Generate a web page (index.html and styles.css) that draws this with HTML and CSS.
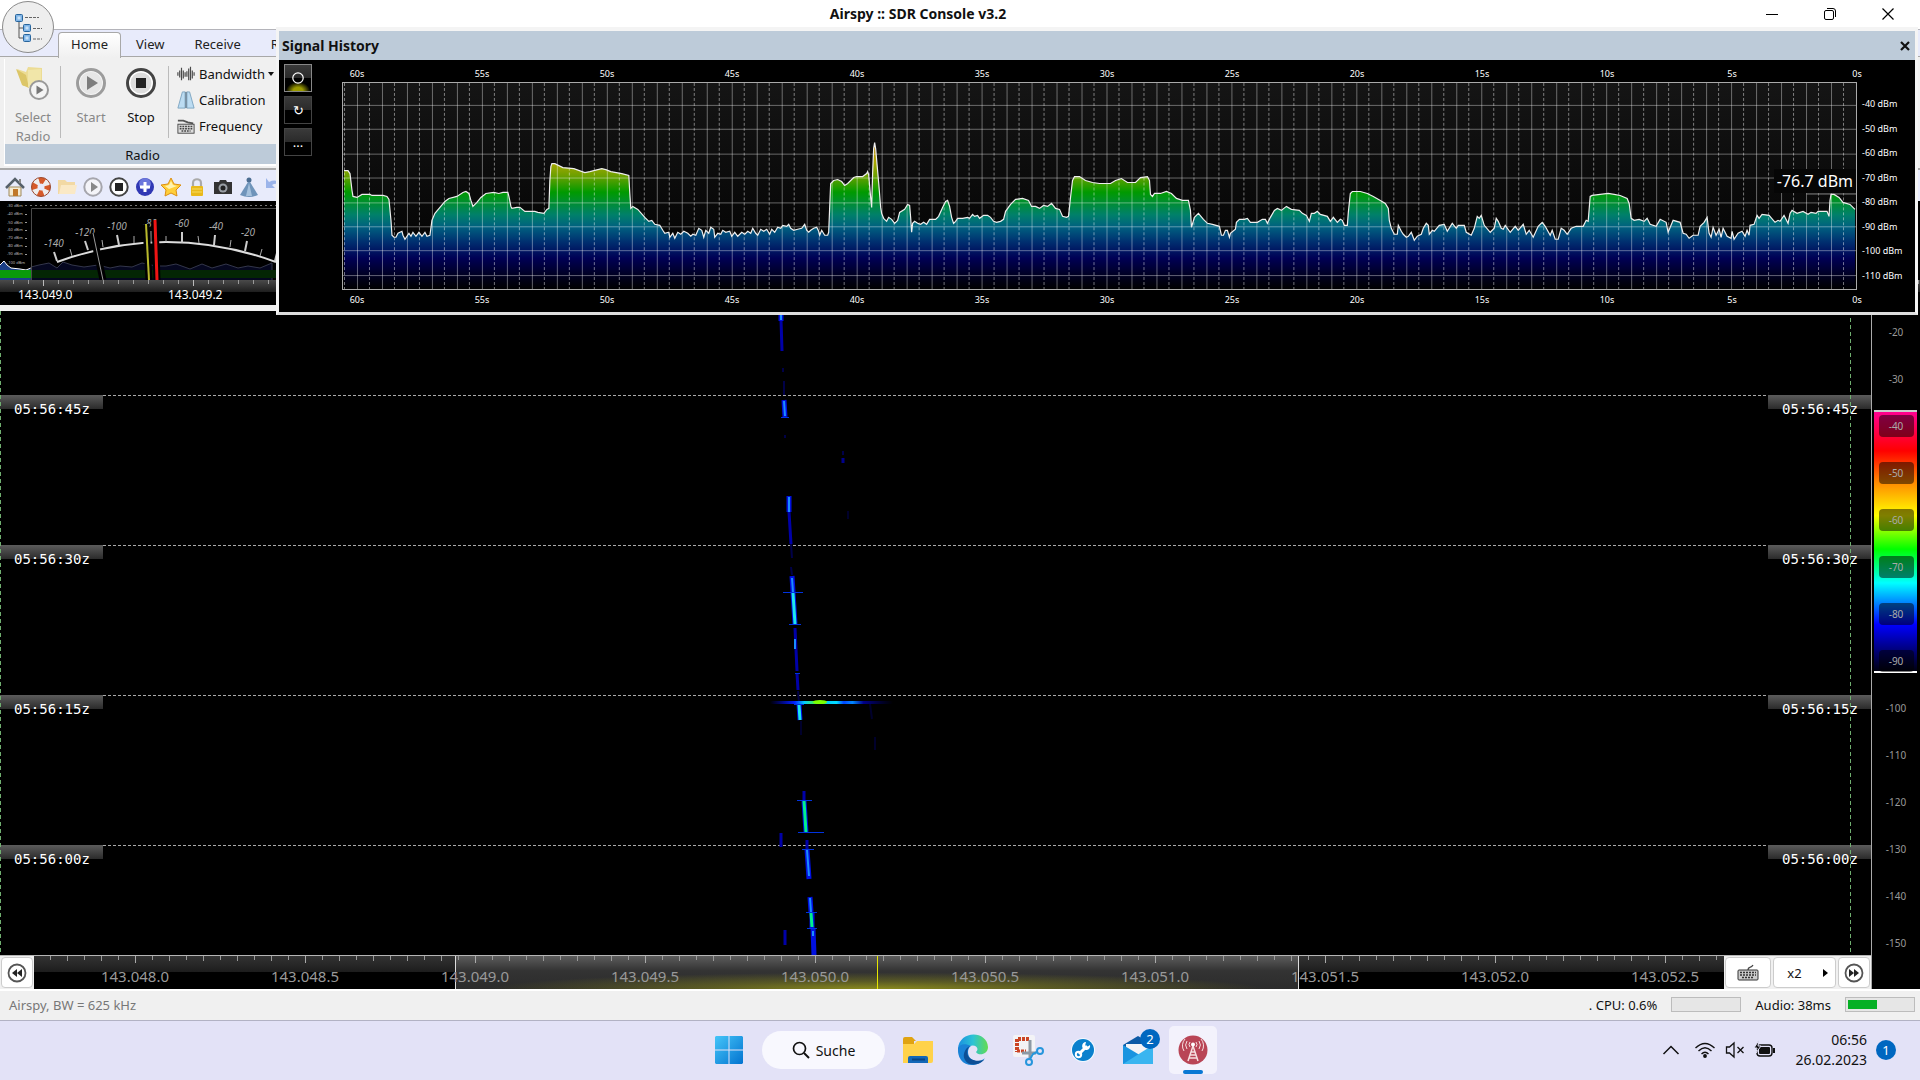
FILE: index.html
```html
<!DOCTYPE html>
<html lang="de">
<head>
  <meta charset="UTF-8" />
  <meta name="viewport" content="width=device-width, initial-scale=1.0"/>
  <title>Airspy :: SDR Console v3.2</title>
  <link rel="stylesheet" href="styles.css">
</head>
<body>

  <header class="titlebar">
    <h1>Airspy :: SDR Console v3.2</h1>
    <div class="window-controls">
      <button aria-label="Minimieren"><svg width="14" height="14"><path d="M1 7.5h12" stroke="#000"/></svg></button>
      <button aria-label="Verkleinern"><svg width="14" height="14" fill="none" stroke="#000"><rect x="1.5" y="3.5" width="9" height="9" rx="1.5"/><path d="M4 1.5h6q2.5 0 2.5 2.5v6"/></svg></button>
      <button aria-label="Schließen"><svg width="14" height="14"><path d="M1.5 1.5l11 11M12.5 1.5l-11 11" stroke="#000" stroke-width="1.2"/></svg></button>
    </div>
  </header>

  <button class="app-button" aria-label="Menü">
    <svg width="30" height="30" viewBox="0 0 30 30">
      <path d="M6 8v18h5M6 16h5" fill="none" stroke="#555"/>
      <path d="M12 5.5h14M20 16.5h9M20 27h9" stroke="#666" stroke-dasharray="3 1"/>
      <g fill="#7fb4e6" stroke="#28659c"><rect x="2.5" y="2.5" width="7" height="7" rx="1"/><rect x="10.5" y="12.5" width="7" height="7" rx="1"/><rect x="10.5" y="22.5" width="7" height="7" rx="1"/></g>
      <g fill="#c9e2f8"><rect x="4.5" y="4.5" width="3" height="3"/><rect x="12.5" y="14.5" width="3" height="3"/><rect x="12.5" y="24.5" width="3" height="3"/></g>
    </svg>
  </button>

  <!-- Menüband -->
  <section class="ribbon">
    <nav class="tabs">
      <a href="#" class="tab active">Home</a>
      <a href="#" class="tab">View</a>
      <a href="#" class="tab">Receive</a>
      <a href="#" class="tab">R</a>
    </nav>
    <div class="ribbon-body">
      <div class="group">
        <div class="group-tools">
          <button class="big-btn wide" disabled>
            <svg width="36" height="36" viewBox="0 0 36 36">
              <path d="M2 4l9 3 2-5 14 1v18H8z" fill="#ecdc94"/><path d="M1 4l10 6 3 13-7-3z" fill="#dcc668"/><path d="M13 5l13-1v15l-13 3z" fill="#f1e6a9"/>
              <circle cx="24" cy="25" r="9" fill="#f4f4f4" stroke="#999" stroke-width="2"/><path d="M21.5 20.5l7 4.5-7 4.5z" fill="#777"/>
            </svg>
            <span>Select<br>Radio</span>
          </button>
          <button class="big-btn" disabled>
            <svg width="36" height="36" viewBox="0 0 36 36"><circle cx="18" cy="18" r="13.5" fill="#f5f5f5" stroke="#9c9c9c" stroke-width="3"/><circle cx="18" cy="18" r="11" fill="#e6e6e6"/><path d="M14 11l11 7-11 7z" fill="#7d7d7d"/></svg>
            <span>Start</span>
          </button>
          <button class="big-btn">
            <svg width="36" height="36" viewBox="0 0 36 36"><circle cx="18" cy="18" r="13.5" fill="#fff" stroke="#444" stroke-width="3"/><circle cx="18" cy="18" r="10.5" fill="#ddd"/><rect x="13" y="13" width="10" height="10" fill="#222"/></svg>
            <span>Stop</span>
          </button>
          <div class="small-btns">
            <button>
              <svg width="20" height="20" viewBox="0 0 20 20"><path d="M1 8v4M3 6v8M5 3v14M7 6v9M9 8v5M11 7v6M13 4v13M15 2v15M17 6v9M19 8v4" stroke="#4a4a4a" stroke-width="1.3"/></svg>
              Bandwidth <i class="caret"></i>
            </button>
            <button>
              <svg width="20" height="20" viewBox="0 0 20 20"><path d="M6 1h3v18H1zM11 1h3l5 18h-8z" fill="#bcdcf2" stroke="#7ba3c0"/><path d="M10 1v18" stroke="#39556b"/></svg>
              Calibration
            </button>
            <button>
              <svg width="20" height="20" viewBox="0 0 20 20"><path d="M1 4h6l5 2 6 1" fill="none" stroke="#555" stroke-width="2"/><rect x="1" y="8" width="18" height="10" fill="#ddd" stroke="#444"/><path d="M3 10.5h14M3 13h14M5 15.5h10" stroke="#444" stroke-width="1.5" stroke-dasharray="2 1"/></svg>
              Frequency
            </button>
          </div>
        </div>
        <div class="group-caption">Radio</div>
      </div>
    </div>
    <div class="quickbar">
      <button aria-label="Home"><svg viewBox="0 0 20 20"><path d="M4 10h12v9H4z" fill="#f4ead2" stroke="#a08a5c"/><path d="M1 11l9-9 9 9" fill="none" stroke="#56606a" stroke-width="2.5"/><path d="M14 2h2v4h-2z" fill="#888"/><path d="M8 12h5v7H8z" fill="#c0772a"/></svg></button>
      <button aria-label="Hilfe"><svg viewBox="0 0 20 20"><circle cx="10" cy="10" r="6.5" fill="none" stroke="#eee" stroke-width="6"/><circle cx="10" cy="10" r="6.5" fill="none" stroke="#d65a2a" stroke-width="6" stroke-dasharray="5.5 4.71" stroke-dashoffset="2.7"/><circle cx="10" cy="10" r="9.5" fill="none" stroke="#9a4a30"/></svg></button>
      <button aria-label="Öffnen"><svg viewBox="0 0 20 20"><path d="M1 3h7l2 2h8v12H1z" fill="#f2d9a4"/><path d="M4 8h16l-2 9H2z" fill="#fae9c6"/></svg></button>
      <button aria-label="Start"><svg viewBox="0 0 20 20"><circle cx="10" cy="10" r="8.7" fill="#f4f4f8" stroke="#a6a6ad" stroke-width="2"/><path d="M8 5l7 5-7 5z" fill="#888"/></svg></button>
      <button aria-label="Stop"><svg viewBox="0 0 20 20"><circle cx="10" cy="10" r="8.7" fill="#fff" stroke="#444" stroke-width="2"/><path d="M6 6h8v8H6z" fill="#222"/></svg></button>
      <button aria-label="Hinzufügen"><svg viewBox="0 0 20 20"><circle cx="10" cy="10" r="9" fill="#3038b4"/><circle cx="10" cy="7" r="6" fill="#6b76dc"/><path d="M10 5v10M5 10h10" stroke="#fff" stroke-width="3"/></svg></button>
      <button aria-label="Favoriten"><svg viewBox="0 0 20 20"><path d="M10 1l3 6 7 1-5 5 1 6-6-3-6 3 1-6-5-5 7-1z" fill="#ffcf3a" stroke="#dc8f12"/><path d="M10 4l2 4 4 1-8 3-4-3 4-1z" fill="#fff3b0"/></svg></button>
      <button aria-label="Sperren"><svg viewBox="0 0 20 20"><path d="M6 9V6c0-5 8-5 8 0v3" fill="none" stroke="#aaa" stroke-width="2.2"/><rect x="4" y="9" width="12" height="10" rx="1" fill="#e9b91b"/><path d="M5 12h10M5 15h10" stroke="#f7dc61"/></svg></button>
      <button aria-label="Foto"><svg viewBox="0 0 20 20"><path d="M1 5h5l1-2h6l1 2h5v12H1z" fill="#333"/><circle cx="10" cy="11" r="4.5" fill="#9a9fa5"/><circle cx="10" cy="11" r="2.5" fill="#222"/></svg></button>
      <button aria-label="Antenne"><svg viewBox="0 0 20 20"><circle cx="10" cy="3" r="2.5" fill="#4c6d91"/><path d="M9 5h2l8 13q-9 4-18 0z" fill="#6f94ba"/><path d="M10 6l3 13H7z" fill="#a5c1dc"/></svg></button>
      <button aria-label="Zurück"><svg viewBox="0 0 20 20"><path d="M1 1v10h9L7 8q6-4 11 4Q14 0 4 5z" fill="#9bb4ea"/></svg></button>
    </div>
  </section>

  <main class="workspace">
    <!-- Spektrum mit S-Meter -->
    <section class="spectrum">
      <svg class="meter" width="276" height="79" viewBox="0 0 276 79">
        <path d="M25 4.5H276" stroke="#777" stroke-dasharray="2 3"/>
        <g class="tiny">
          <text x="7" y="6">-30 dBm</text><text x="7" y="14">-40 dBm</text><text x="7" y="23">-50 dBm</text><text x="7" y="30">-60 dBm</text>
          <text x="7" y="38">-70 dBm</text><text x="7" y="46">-80 dBm</text><text x="7" y="54">-90 dBm</text><text x="7" y="63">-100 dBm</text>
        </g>
        <path d="M25 13.5h2M25 21.5h2M25 29.5h2M25 37.5h2M25 45.5h2M25 53.5h2" stroke="#999"/>
        <path d="M0 64l4-4 3 4 4 3 9 1 6 1 5-2v12H0z" fill="#1b3f86"/>
        <path d="M0 64l4-4 3 4 4 3 9 1 6 1 5-2" fill="none" stroke="#fff"/>
        <path d="M31 66l8-2 10-2 8 5 6-6 9 3 12 2 14-2 12 3 10-2 12 1 10-4 14 3 10 0 10-2 14 5 12-5 10 4 14-4 12 4 10-2 12 2 12-5v19H31z" fill="#05071f" stroke="#33364a"/>
        <path d="M0 69h31v8H0z" fill="#0a9a0a"/>
        <path d="M31 69h245v8H31z" fill="#042604"/>
        <path d="M31.5 79V7.5H276" fill="none" stroke="#4a4a4a"/>
        <path d="M57 61Q166 21 276 61" fill="none" stroke="#ddd" stroke-width="2"/>
        <path d="M57 60l-3-9M88 49l-3-9M119 44l-2-10M182 42V31M214 44l1-10M245 50l2-10M275 60l2-8" stroke="#ccc" stroke-width="2"/>
        <path d="M72 55l-2-7M103 46l-1-7M134 42v-7M151 42V30M166 41v-6M199 42l-1-7M230 46l1-7M260 55l2-7" stroke="#aaa"/>
        <g class="meter-labels">
          <text x="54" y="46">-140</text><text x="85" y="35">-120</text><text x="117" y="29">-100</text><text x="150" y="26">-80</text>
          <text x="182" y="26">-60</text><text x="216" y="29">-40</text><text x="248" y="35">-20</text>
        </g>
        <path d="M93 32l10 47" stroke="#000" stroke-width="7"/><path d="M93 32l10 47" stroke="#999"/>
        <path d="M146 23l3 56M155 19l2 60" stroke="#000" stroke-width="7"/>
        <path d="M146 23l3 56" stroke="#b9b92c" stroke-width="2"/>
        <path d="M155 19l2 60" stroke="#f01414" stroke-width="3"/>
      </svg>
      <div class="mini-ruler"><span>143.049.0</span><span>143.049.2</span></div>
    </section>

    <section class="receiver">
      <div class="receiver-main">
        <div class="splitter"></div>
        <div class="waterfall">
          <div class="time-row"><time>05:56:45z</time><i></i><time>05:56:45z</time></div>
          <div class="time-row"><time>05:56:30z</time><i></i><time>05:56:30z</time></div>
          <div class="time-row"><time>05:56:15z</time><i></i><time>05:56:15z</time></div>
          <div class="time-row"><time>05:56:00z</time><i></i><time>05:56:00z</time></div>
          <svg class="trace" viewBox="0 0 1871 644" preserveAspectRatio="none">
            <defs>
              <linearGradient id="burst">
                <stop offset="0" stop-color="#00f" stop-opacity="0"/><stop offset=".2" stop-color="#02f"/><stop offset=".28" stop-color="#0cf"/>
                <stop offset=".4" stop-color="#6f0"/><stop offset=".47" stop-color="#0cf"/><stop offset=".54" stop-color="#0df"/><stop offset=".6" stop-color="#04f"/>
                <stop offset=".67" stop-color="#08f"/><stop offset=".76" stop-color="#008"/><stop offset="1" stop-color="#006" stop-opacity="0"/>
              </linearGradient>
            </defs>
            <!-- schwache Anteile -->
            <g stroke="#000048" stroke-width="2">
              <path d="M783 57v4M784 70v14M791 233l1 14M791 256l1 8M798 380l1 12M843 140v4M785 124v3"/>
              <path d="M870 393l2 15M875 426v13M848 200v8M801 410v14" opacity=".6"/>
            </g>
            <path d="M843 147v5" stroke="#00008c" stroke-width="3"/>
            <g stroke="#0000a8" stroke-width="3">
              <path d="M781 9l1 31M789 201l2 32M795 317l2 43M797 362l1 17M781 522v14M785 619v15M804 480v9M807 529v9"/>
            </g>
            <g stroke="#0010e0" stroke-width="5">
              <path d="M784 89l1 17M789 185v16M792 265l1 16M793 281l2 32M799 393l1 16M804 490l2 31M807 538l2 30M810 586l1 15M812 601v16M813 617l1 27M781 4v6"/>
            </g>
            <g stroke="#1a8cff" stroke-width="2">
              <path d="M784 90l1 15M789 186v15M792 267l1 14M807 539l2 26M810 587l1 14M781 4v5M795 328v10M813 620v5"/>
            </g>
            <g stroke="#0033e0">
              <path d="M783 281.5h20M789 313.5h12M797 489.5h15M798 521.5h26M802 538.5h12M806 601.5h11M807 617.5h10M781 106.5h8M795 362.5h5M794 393.5h10"/>
            </g>
            <path d="M793 282l2 31M799 394l1 15" stroke="#1ce6ee" stroke-width="3"/>
            <path d="M804 490l2 31M811 602l1 14" stroke="#00f08c" stroke-width="3"/>
            <rect x="770" y="390" width="123" height="3" fill="url(#burst)"/>
            <ellipse cx="820" cy="391" rx="7" ry="2" fill="#7dff00"/>
          </svg>
        </div>
        <div class="tuning">
          <button class="icon-btn" aria-label="Zurück"><svg width="20" height="20" viewBox="0 0 20 20"><circle cx="10" cy="10" r="8.5" fill="#fff" stroke="#555" stroke-width="1.8"/><path d="M10 6v8l-5-4zM15 6v8l-5-4z" fill="#222"/></svg></button>
          <div class="ruler">
            <div class="passband"></div>
            <span>143.048.0</span><span>143.048.5</span><span>143.049.0</span><span>143.049.5</span><span>143.050.0</span>
            <span>143.050.5</span><span>143.051.0</span><span>143.051.5</span><span>143.052.0</span><span>143.052.5</span>
          </div>
          <div class="tuning-btns">
            <button class="icon-btn wide" aria-label="Frequenz eingeben"><svg width="22" height="20" viewBox="0 0 22 20"><path d="M11 7c0-4 3-1 5-5" fill="none" stroke="#444" stroke-width="1.3"/><rect x="1" y="7" width="20" height="10" rx="1" fill="#ccc" stroke="#333"/><path d="M3 9.5h16M3 12h16M5 14.5h12" stroke="#333" stroke-width="1.5" stroke-dasharray="2 1"/></svg></button>
            <button class="icon-btn zoom">x2 <i class="caret-right"></i></button>
            <button class="icon-btn" aria-label="Vor"><svg width="20" height="20" viewBox="0 0 20 20"><circle cx="10" cy="10" r="8.5" fill="#fff" stroke="#555" stroke-width="1.8"/><path d="M10 6v8l5-4zM5 6v8l5-4z" fill="#222"/></svg></button>
          </div>
        </div>
      </div>

      <aside class="scale">
        <span>-20</span><span>-30</span>
        <div class="colours">
          <span><b>-40</b></span><span><b>-50</b></span><span><b>-60</b></span><span><b>-70</b></span><span><b>-80</b></span><span><b>-90</b></span>
        </div>
        <span>-100</span><span>-110</span><span>-120</span><span>-130</span><span>-140</span><span>-150</span>
      </aside>
    </section>
  </main>

  <!-- Schwebendes Fenster -->
  <section class="history">
    <div class="history-head">
      <h2>Signal History</h2>
      <button aria-label="Schließen"><svg width="12" height="12"><path d="M2 2l8 8M10 2l-8 8" stroke="#111" stroke-width="2.2"/></svg></button>
    </div>
    <div class="history-body">
      <div class="history-tools">
        <button class="on" aria-label="Aufnahme"><svg width="14" height="14"><circle cx="7" cy="7" r="5.2" fill="none" stroke="#fff" stroke-width="1.2"/></svg></button>
        <button aria-label="Neu starten">↻</button>
        <button aria-label="Mehr">...</button>
      </div>
      <div class="chart">
        <div class="seconds">
          <span>60s</span><span>55s</span><span>50s</span><span>45s</span><span>40s</span><span>35s</span><span>30s</span><span>25s</span><span>20s</span><span>15s</span><span>10s</span><span>5s</span><span>0s</span>
        </div>
        <div class="plot">
          <svg viewBox="0 0 1514 207" preserveAspectRatio="none">
            <defs>
              <linearGradient id="level" gradientUnits="userSpaceOnUse" x1="0" y1="0" x2="0" y2="207">
                <stop offset=".29" stop-color="#b87800"/><stop offset=".38" stop-color="#b0a800"/><stop offset=".45" stop-color="#6ca000"/>
                <stop offset=".53" stop-color="#009a00"/><stop offset=".64" stop-color="#00806a"/><stop offset=".7" stop-color="#006080"/>
                <stop offset=".77" stop-color="#003070"/><stop offset=".85" stop-color="#000055"/><stop offset=".94" stop-color="#00001e"/><stop offset="1" stop-color="#000"/>
              </linearGradient>
              <pattern id="secs" x="14" width="25" height="207" patternUnits="userSpaceOnUse">
                <path d="M.5 0v207" stroke="#fff" stroke-opacity=".38"/>
                <path d="M12.5 0v207" stroke="#fff" stroke-opacity=".45" stroke-dasharray="3 2"/>
              </pattern>
            </defs>
            <path id="area" fill="url(#level)"/>
            <rect width="1514" height="207" fill="url(#secs)"/>
            <path d="M0 22.5H1514M0 46.5H1514M0 71.5H1514M0 95.5H1514M0 120.5H1514M0 144.5H1514M0 168.5H1514M0 193.5H1514" stroke="#fff" stroke-opacity=".38"/>
            <path d="M1464 111.5h50" stroke="#888"/>
            <polyline id="line" fill="none" stroke="#eee" stroke-width="1.2"/>
          </svg>
          <output class="reading">-76.7 dBm</output>
        </div>
        <div class="levels">
          <span>-40 dBm</span><span>-50 dBm</span><span>-60 dBm</span><span>-70 dBm</span><span>-80 dBm</span><span>-90 dBm</span><span>-100 dBm</span><span>-110 dBm</span>
        </div>
        <div class="seconds">
          <span>60s</span><span>55s</span><span>50s</span><span>45s</span><span>40s</span><span>35s</span><span>30s</span><span>25s</span><span>20s</span><span>15s</span><span>10s</span><span>5s</span><span>0s</span>
        </div>
      </div>
    </div>
  </section>

  <footer class="statusbar">
    <span class="device">Airspy, BW = 625 kHz</span>
    <label for="cpu">. CPU: 0.6%</label>
    <progress id="cpu" value="0" max="100"></progress>
    <label for="audio">Audio: 38ms</label>
    <progress id="audio" value="46" max="100"></progress>
  </footer>

  <nav class="taskbar">
    <div class="apps">
      <button class="app" aria-label="Start"><svg width="30" height="30" viewBox="0 0 30 30"><defs><linearGradient id="blue" gradientUnits="userSpaceOnUse" x1="0" y1="0" x2="30" y2="30"><stop stop-color="#48c8fa"/><stop offset="1" stop-color="#0070ce"/></linearGradient></defs><path d="M2 1h12.500v13.500H1V2zM15.500 1H28l1 1v12.500H15.500zM1 15.500h13.500V29H2l-1-1zM15.500 15.500H29V28l-1 1H15.500z" fill="url(#blue)"/></svg></button>
      <button class="search"><svg width="18" height="18" viewBox="0 0 18 18"><circle cx="7.5" cy="7.5" r="6" fill="none" stroke="#111" stroke-width="1.7"/><path d="M12 12l5 5" stroke="#111" stroke-width="1.9"/></svg>Suche</button>
      <button class="app" aria-label="Explorer"><svg width="32" height="30" viewBox="0 0 32 30"><path d="M1 4q0-2 2-2h7l4 4h-2v6H1z" fill="#e0a312"/><path d="M1 9h11l3-3h16v20q0 2-2 2H1z" fill="#ffd24a"/><path d="M6 28v-5q0-2 2-2h16q2 0 2 2v5z" fill="#1368b8"/><path d="M10 24.5h13" stroke="#0a4483" stroke-width="2"/></svg></button>
      <button class="app" aria-label="Edge"><svg width="32" height="32" viewBox="0 0 32 32"><defs><linearGradient id="edge"><stop stop-color="#1a8fe0"/><stop offset=".5" stop-color="#2cc3d5"/><stop offset="1" stop-color="#63dc4f"/></linearGradient></defs><path d="M1 15C2-4 30-4 31 13c0 8-10 9-12 5 4-4-1-8-6-6C8 13 6 20 7 24 3 23 1 19 1 15z" fill="url(#edge)"/><path d="M1 14c2-4 7-5 13-2-5 3-4 14 5 15 5 1 9-3 9-3-5 9-19 9-24 2C1 22 1 18 1 14z" fill="#1a82d6"/><path d="M13 12c-6 6-2 18 14 14-6 6-16 6-19 0-3-5 0-12 5-14z" fill="#0d4f96"/></svg></button>
      <button class="app" aria-label="Snipping Tool"><svg width="32" height="32" viewBox="0 0 32 32"><rect x="1" y="1" width="22" height="22" rx="2" fill="#f3f3f6"/><path d="M17 5H5v13" fill="none" stroke="#cb4424" stroke-width="4" stroke-dasharray="3 1"/><path d="M5 17h9" stroke="#cb4424" stroke-width="3" stroke-dasharray="3 1"/><path d="M18 6v18M10 19h14" stroke="#8d99a4" stroke-width="3"/><circle cx="28" cy="17" r="3" fill="none" stroke="#2796dc" stroke-width="2"/><circle cx="17" cy="28" r="3" fill="none" stroke="#2796dc" stroke-width="2"/><path d="M18 25l3-5 4-2" fill="none" stroke="#2796dc" stroke-width="2"/></svg></button>
      <button class="app" aria-label="Werkzeug"><svg width="26" height="26" viewBox="0 0 26 26"><circle cx="13" cy="13" r="12" fill="#f4faff"/><circle cx="13" cy="13" r="11" fill="#0a80cd"/><path d="M9 17l8-8" stroke="#fff" stroke-width="3"/><circle cx="8.5" cy="17.5" r="2.7" fill="none" stroke="#fff" stroke-width="2"/><path d="M20 8a4 4 0 1 1-4-3l-1 4 2 1z" fill="#fff"/></svg></button>
      <button class="app" aria-label="Mail"><svg width="32" height="32" viewBox="0 0 32 32"><path d="M1 11L16 2l15 9v5H1z" fill="#0c5aa5"/><path d="M4 10h24v9l-12 5-12-5z" fill="#f4f4f6"/><path d="M1 11l30 18v1H1z" fill="#1a94e0"/><path d="M31 11L1 30h30z" fill="#3ab5f0"/></svg><b class="count">2</b></button>
      <button class="app current" aria-label="SDR Console"><svg width="30" height="30" viewBox="0 0 30 30"><circle cx="15" cy="15" r="14.5" fill="#b94556"/><g fill="none" stroke="#f6dfe0"><path d="M15 11L10 26M15 11l5 15M13 17h4M12 20h6M11 23h8" stroke-width="1.5"/><path d="M9 14a7 7 0 0 1 0-8M21 14a7 7 0 0 0 0-8M6 16a10 10 0 0 1 1-12M24 16a10 10 0 0 0-1-12M12 12a4 4 0 0 1 0-5M18 12a4 4 0 0 0 0-5"/></g><circle cx="15" cy="9.5" r="2" fill="#fff"/></svg></button>
    </div>
    <div class="tray">
      <button aria-label="Ausgeblendete Symbole"><svg width="18" height="12" fill="none" stroke="#111" stroke-width="1.5"><path d="M1.5 10L9 2.5l7.500 7.500"/></svg></button>
      <button aria-label="WLAN"><svg width="22" height="18" viewBox="0 0 22 18" fill="none" stroke="#111" stroke-width="1.4"><path d="M1.5 7q9.500-9 19 0M4.500 10q6.500-6.500 13 0M7.500 13q3.500-3.500 7 0"/><circle cx="11" cy="15" r="1.2" fill="#111"/></svg></button>
      <button aria-label="Ton aus"><svg width="20" height="18" viewBox="0 0 20 18" fill="none" stroke="#111" stroke-width="1.3"><path d="M1.5 6v6h3l4.500 4V2L4.500 6zM12.500 6l6 6M18.500 6l-6 6"/></svg></button>
      <button aria-label="Akku"><svg width="22" height="20" viewBox="0 0 22 20"><rect x="3" y="5" width="15" height="11" rx="3" fill="none" stroke="#111" stroke-width="1.4"/><rect x="5" y="7" width="11" height="7" rx="1" fill="#111"/><path d="M20 8v5" stroke="#111" stroke-width="2"/><path d="M5 0L0 8h3l-1 5 5-7H4z" fill="#111" stroke="#e3e2f7"/></svg></button>
      <div class="clock"><span>06:56</span><span>26.02.2023</span></div>
      <b class="count">1</b>
    </div>
  </nav>

  <script src="script.js"></script>
</body>
</html>
```

FILE: styles.css
```css
* {
  box-sizing: border-box;
}

body {
  margin: 0;
  min-height: 100vh;
  display: flex;
  flex-direction: column;
  font-family: "Noto Sans", "Open Sans", sans-serif;
  font-size: 13px;
  color: #111;
  background: #000;
  overflow: hidden;
}

button {
  font: inherit;
  color: inherit;
  background: none;
  border: none;
  padding: 0;
}

svg {
  display: block;
  flex: none;
}

h1, h2 {
  margin: 0;
  font-size: 14px;
  font-weight: bold;
}

/* Titelleiste */
.titlebar {
  display: flex;
  align-items: center;
  height: 29px;
  padding: 0 3px 2px 93px;
  background: #fff;
}

.titlebar h1 {
  flex: 1;
  text-align: center;
}

.window-controls {
  display: flex;
}

.window-controls button {
  width: 58px;
  height: 27px;
  display: flex;
  align-items: center;
  justify-content: center;
}

.app-button {
  position: absolute;
  left: 2px;
  top: 1px;
  width: 52px;
  height: 52px;
  display: flex;
  align-items: center;
  justify-content: center;
  border: 1px solid #8b8b8b;
  border-radius: 50%;
  background: #eee;
}

/* Menüband */
.ribbon {
  background: #e8ebfb;
}

.tabs {
  display: flex;
  height: 28px;
  padding: 2px 0 0 58px;
  border-top: 1px solid #b4b4ba;
  border-bottom: 1px solid #a8a8a8;
}

.tab {
  padding: 0 15px;
  line-height: 25px;
  color: #222;
  text-decoration: none;
}

.tab.active {
  height: 26px;
  padding: 0 12px;
  line-height: 23px;
  border: 1px solid #a8a8a8;
  border-bottom: none;
  border-radius: 4px 4px 0 0;
  background: linear-gradient(#fff, #f0f0f0);
}

.ribbon-body {
  padding: 2px 4px;
  background: #f0f0f0;
  border-bottom: 2px solid #aaa;
}

.group {
  border-left: 1px solid #fff;
  border-bottom: 2px solid #fff;
}

.group-tools {
  display: flex;
  height: 85px;
  padding-top: 2px;
}

.big-btn {
  width: 50px;
  height: 78px;
  padding-top: 4px;
  line-height: 19px;
  display: flex;
  flex-direction: column;
  align-items: center;
  gap: 7px;
}

.big-btn.wide {
  width: 61px;
  padding-right: 5px;
  background: linear-gradient(#bbb, #bbb) no-repeat 55px 5px / 1px 72px;
}

.big-btn:disabled {
  color: #888;
}

.small-btns {
  display: flex;
  flex-direction: column;
  margin-left: 2px;
  height: 78px;
  padding-left: 8px;
  background: linear-gradient(#bbb, #bbb) no-repeat 0 5px / 1px 72px;
}

.small-btns button {
  display: flex;
  align-items: center;
  gap: 3px;
  height: 26px;
}

.small-btns button svg {
  height: 18px;
}

.caret {
  border: 3px solid transparent;
  border-top: 4px solid #111;
  border-bottom: none;
}

.group-caption {
  height: 20px;
  padding-right: 1636px;
  line-height: 22px;
  text-align: center;
  background: #bdcbd9;
}

.quickbar {
  display: flex;
  gap: 6px;
  height: 31px;
  padding: 7px 5px 4px;
}

.quickbar svg {
  width: 20px;
  height: 20px;
}

/* Spektrum */
.workspace {
  flex: 1;
  display: flex;
  flex-direction: column;
}

.spectrum {
  height: 104px;
}

.tiny {
  font-size: 4px;
  fill: #bbb;
}

.meter-labels {
  font-size: 10px;
  font-style: italic;
  fill: #aaa;
  text-anchor: middle;
}

.mini-ruler {
  display: flex;
  height: 25px;
  padding: 5px 0 0 18px;
  line-height: 20px;
  font-size: 12px;
  color: #fff;
  background:
    repeating-linear-gradient(90deg, #bbb 0 1px, transparent 1px 150px) 43px 0 / 100% 6px no-repeat,
    repeating-linear-gradient(90deg, #999 0 1px, transparent 1px 15px) 13px 0 / 100% 4px no-repeat,
    linear-gradient(#4a4a4a, #1c1c1c 50%, #000 50%);
}

.mini-ruler span {
  width: 150px;
}

.splitter {
  height: 6px;
  background: #f0f0f0;
}

/* Wasserfall */
.receiver {
  flex: 1;
  display: flex;
}

.receiver-main {
  flex: 1;
  min-width: 0;
  display: flex;
  flex-direction: column;
}

.waterfall {
  position: relative;
  flex: 1;
  padding-top: 84px;
}

.waterfall::before,
.waterfall::after {
  content: "";
  position: absolute;
  top: 0;
  bottom: 0;
  left: 0;
  width: 1px;
  background: repeating-linear-gradient(#6fae6f 0 4px, transparent 4px 7px);
}

.waterfall::after {
  left: auto;
  right: 20px;
}

.time-row {
  display: flex;
  height: 150px;
}

.time-row:nth-child(4) {
  height: 100px;
}

.time-row time {
  width: 103px;
  padding: 4px 0 0 14px;
  font-family: "DejaVu Sans Mono", monospace;
  font-size: 14px;
  line-height: 20px;
  color: #fff;
  background: linear-gradient(#5c5c5c, #2b2b2b) no-repeat 0 0 / 100% 14px;
}

.time-row i {
  flex: 1;
  height: 1px;
  background: repeating-linear-gradient(90deg, #aaa 0 3px, transparent 3px 5px);
}

.trace {
  position: absolute;
  left: 0;
  top: 0;
  width: 100%;
  height: 100%;
}

/* Frequenzskala */
.tuning {
  display: flex;
  height: 34px;
  border-top: 1px solid #b5b5b5;
  background: #f0f0f0;
}

.icon-btn {
  width: 32px;
  height: 31px;
  margin: 1px;
  display: flex;
  align-items: center;
  justify-content: center;
  border: 1px solid #ccc;
  border-radius: 4px;
  background: #fff;
}

.icon-btn.wide {
  width: 46px;
}

.icon-btn.zoom {
  width: 63px;
  gap: 21px;
  padding-left: 6px;
}

.caret-right {
  border: 4px solid transparent;
  border-left: 5px solid #000;
  border-right: none;
}

.tuning-btns {
  display: flex;
}

.ruler {
  position: relative;
  flex: 1;
  min-width: 0;
  display: flex;
  padding-left: 16px;
  overflow: hidden;
  background: linear-gradient(#333, #1c1c1c 50%, #000 50%);
}

.ruler::before {
  content: "";
  position: absolute;
  inset: 0;
  z-index: 1;
  background:
    repeating-linear-gradient(90deg, #aaa 0 1px, transparent 1px 170px) 101px 0 / 100% 7px no-repeat,
    repeating-linear-gradient(90deg, #999 0 1px, transparent 1px 34px) -1px 0 / 100% 5px no-repeat,
    repeating-linear-gradient(90deg, #999 0 1px, transparent 1px 17px) -1px 0 / 100% 4px no-repeat;
}

.ruler span {
  position: relative;
  flex: none;
  width: 170px;
  padding-top: 5px;
  font-size: 15px;
  line-height: 30px;
  text-align: center;
  color: #999;
}

.passband {
  position: absolute;
  left: 421px;
  top: 0;
  bottom: 0;
  width: 844px;
  border: 1px solid #ddd;
  border-width: 0 1px;
  background:
    linear-gradient(#e6e600, #e6e600) 421px 0 / 1px 100% no-repeat,
    radial-gradient(ellipse 46% 50% at 50% 100%, #8a8a1e, rgba(120, 120, 30, 0.6) 45%, transparent),
    linear-gradient(#5c5c5c, #333 45%, #2c2c2c);
}

/* Pegelskala */
.scale {
  flex: none;
  width: 49px;
  padding-top: 3px;
  display: flex;
  flex-direction: column;
  border-left: 1px solid #aaa;
  font-size: 10px;
  color: #999;
}

.scale span {
  position: relative;
  height: 47px;
  display: flex;
  align-items: center;
  justify-content: center;
}

.colours {
  position: relative;
}

.colours::before {
  content: "";
  position: absolute;
  inset: 8px 3px 11px 2px;
  border-top: 2px solid #ccc;
  border-bottom: 2px solid #fff;
  background: linear-gradient(#ff0090, #f00 15%, #f80 27%, #ff0 40%, #0f0 53%, #0ff 66%, #00f 82%, #000010);
}

.colours b {
  width: 35px;
  font-weight: normal;
  line-height: 22px;
  text-align: center;
  border-radius: 4px;
  color: #aaa;
  background: rgba(0, 0, 0, 0.5);
}

/* Signal History */
.history {
  position: absolute;
  left: 276px;
  right: 2px;
  top: 27px;
  border: 4px solid #f4f4f4;
  border-width: 4px 3px 3px;
  border-bottom-color: #ddd;
  background: #000;
}

.history-head {
  display: flex;
  align-items: center;
  justify-content: space-between;
  height: 29px;
  padding: 0 4px 0 3px;
  background: #bdcbd9;
}

.history-body {
  display: flex;
  height: 252px;
  padding: 4px 0 0 5px;
  color: #fff;
}

.history-tools {
  width: 58px;
  display: flex;
  flex-direction: column;
  gap: 4px;
}

.history-tools button {
  width: 28px;
  height: 28px;
  display: flex;
  align-items: center;
  justify-content: center;
  border: 1px solid #444;
  background: linear-gradient(#3a3a3a, #2a2a2a 50%, #000 50%);
}

.history-tools .on {
  border-color: #888;
  background:
    radial-gradient(ellipse 12px 9px at 50% 100%, #9a9a00 40%, transparent),
    linear-gradient(#3a3a3a, #2a2a2a 50%, #000 50%);
}

.chart {
  flex: 1;
  min-width: 0;
  display: grid;
  grid-template-columns: 1fr 58px;
  grid-template-rows: 18px 208px 20px;
  font-size: 9px;
}

.seconds {
  grid-column: 1;
  display: flex;
  justify-content: space-between;
  padding-left: 15px;
  line-height: 19px;
}

.seconds span {
  width: 0;
  display: flex;
  justify-content: center;
}

.plot {
  grid-column: 1;
  position: relative;
  border: 1px solid #aaa;
  background: linear-gradient(#151515, #000);
}

.plot svg {
  width: 100%;
  height: 100%;
}

.reading {
  position: absolute;
  right: 0;
  top: 86px;
  padding: 0 3px;
  font-size: 16px;
  line-height: 24px;
  white-space: nowrap;
  background: #060606;
}

.levels {
  grid-column: 2;
  display: flex;
  flex-direction: column;
  justify-content: space-between;
  padding: 22px 0 14px 5px;
}

.levels span {
  height: 0;
  line-height: 0;
}

/* Statusleiste */
.statusbar {
  display: flex;
  align-items: center;
  gap: 14px;
  height: 32px;
  padding: 0 5px 2px 9px;
  background: #f0f0f0;
  border-top: 2px solid #fff;
  border-bottom: 1px solid #b2b2c4;
}

.device {
  flex: 1;
  color: #777;
}

progress {
  appearance: none;
  width: 70px;
  height: 15px;
  padding: 2px;
  border: 1px solid #bcbcbc;
  background: #e6e6e6;
}

progress::-webkit-progress-bar {
  background: #e6e6e6;
}

progress::-webkit-progress-value {
  background: #06b025;
}

/* Taskleiste */
.taskbar {
  position: relative;
  display: flex;
  justify-content: center;
  height: 59px;
  padding: 5px 0 0 2px;
  background: #e3e2f7;
}

.apps {
  display: flex;
  gap: 7px;
}

.app {
  position: relative;
  width: 48px;
  height: 48px;
  display: flex;
  align-items: center;
  justify-content: center;
  border-radius: 5px;
}

.app.current {
  background: #f3f2fc;
}

.app.current::after {
  content: "";
  position: absolute;
  left: 14px;
  bottom: 0;
  width: 20px;
  height: 4px;
  border-radius: 2px;
  background: #0a78d4;
}

.search {
  width: 123px;
  height: 38px;
  margin: 5px 2px;
  display: flex;
  align-items: center;
  justify-content: center;
  gap: 6px;
  border-radius: 19px;
  font-size: 14px;
  background: #f8f8fe;
}

.count {
  width: 20px;
  height: 20px;
  border-radius: 50%;
  font-weight: normal;
  line-height: 20px;
  text-align: center;
  color: #fff;
  background: #0067c0;
}

.app .count {
  position: absolute;
  right: 2px;
  top: 3px;
}

.tray {
  position: absolute;
  right: 24px;
  top: 0;
  height: 58px;
  display: flex;
  align-items: center;
  gap: 9px;
}

.tray button:first-child {
  margin-right: 5px;
}

.clock {
  display: flex;
  flex-direction: column;
  align-items: flex-end;
  margin-left: 10px;
  font-size: 14px;
  line-height: 20px;
}
```

FILE: script.js
```js
// Pegelverlauf der letzten 60 Sekunden, x,y im Koordinatensystem des Diagramms
const history60 = `
1,88 5,88 7,91 9,108 10,114 14,115 19,112 27,112 29,113 35,113 40,113 44,114 46,117 48,138 49,153 51,155 53,155
55,151 59,149 60,153 62,157 66,151 68,154 70,150 73,154 76,150 79,154 82,150 84,154 87,153 89,138 92,131 97,125
102,119 106,116 114,114 120,110 123,109 126,111 128,118 130,124 134,120 138,115 143,111 151,110 156,111 160,110
165,110 166,114 168,124 169,126 174,125 177,125 182,129 188,129 192,129 195,130 201,131 204,127 206,126 207,98
208,84 209,81 212,81 220,85 231,86 242,90 247,89 259,86 263,87 268,89 279,91 286,93 287,111 288,126 290,124
295,127 302,135 306,139 309,138 312,142 317,143 320,148 322,151 326,150 327,155 330,151 332,156 335,150 338,152
341,149 345,151 348,154 350,152 353,153 356,146 359,148 361,155 363,148 366,151 368,145 371,147 372,155 375,151
378,152 380,148 383,150 387,149 389,154 392,150 395,154 399,150 402,152 405,149 408,151 410,146 413,151 415,153
418,147 421,149 424,147 427,152 429,147 432,150 435,145 438,146 440,143 444,144 446,142 448,146 451,148 455,147
459,146 462,142 464,148 466,150 468,148 471,146 474,145 476,149 477,153 479,148 482,153 485,153 486,150 487,125
488,101 491,98 495,97 499,99 502,103 505,101 511,95 514,94 520,94 524,91 525,89 526,92 528,115 529,125 530,90
531,66 532,60 533,66 536,100 538,125 539,131 541,136 544,139 546,135 549,137 552,141 555,138 557,130 562,127
565,122 567,123 568,135 569,150 570,141 572,139 575,141 578,142 581,140 584,142 587,137 593,137 596,134 600,125
603,119 605,118 607,124 609,135 611,141 613,139 615,136 620,136 625,135 627,136 630,132 632,134 635,133 637,136
641,133 645,133 648,135 651,139 654,140 658,139 661,137 663,129 668,122 673,117 680,116 686,118 689,124 693,124
697,126 701,123 705,124 709,121 713,126 717,127 720,134 724,135 726,134 728,115 730,98 732,94 737,94 743,98
750,100 757,101 768,101 773,98 779,96 785,100 793,100 798,95 805,94 807,98 808,112 810,114 812,111 818,111
824,109 829,111 834,116 840,118 846,118 848,128 849,145 852,135 856,131 861,137 865,141 870,142 877,144 879,153
881,153 883,148 885,148 887,155 888,151 893,147 894,140 897,137 902,137 905,136 908,140 915,140 920,137 923,137
925,141 928,135 932,128 935,126 939,128 944,124 949,127 957,128 960,131 964,133 967,139 969,131 972,131 975,129
978,132 985,134 988,139 991,135 995,140 998,137 1000,138 1002,143 1005,143 1006,130 1008,111 1010,109 1018,109
1025,111 1031,114 1038,118 1043,121 1046,126 1047,138 1049,146 1052,152 1055,152 1056,143 1059,149 1061,152
1064,155 1066,154 1069,150 1072,158 1075,154 1079,152 1081,146 1084,141 1086,143 1087,152 1090,148 1092,149
1097,143 1102,142 1105,149 1110,141 1114,146 1116,143 1122,143 1124,150 1129,153 1132,146 1135,134 1137,136
1139,133 1142,143 1148,150 1152,146 1154,136 1156,139 1159,146 1161,147 1163,143 1168,150 1173,144 1176,148
1181,142 1184,152 1187,148 1191,155 1196,144 1200,140 1203,144 1208,153 1210,148 1213,157 1216,157 1219,146
1222,148 1225,152 1229,146 1234,144 1241,144 1244,138 1246,139 1248,114 1250,113 1258,112 1266,111 1272,112
1278,113 1285,116 1287,121 1289,136 1292,138 1297,137 1302,139 1305,136 1308,142 1314,144 1318,137 1324,140
1326,150 1331,138 1338,140 1341,151 1344,152 1347,156 1351,153 1356,153 1358,144 1362,140 1365,135 1367,151
1369,155 1371,145 1374,153 1377,147 1379,155 1381,146 1385,154 1389,156 1390,149 1392,157 1396,151 1400,149
1403,154 1405,148 1407,153 1408,143 1412,142 1415,133 1417,136 1420,132 1427,133 1433,140 1436,138 1438,139
1442,133 1446,141 1448,131 1450,128 1455,131 1461,129 1466,132 1469,130 1474,131 1476,129 1485,129 1487,134
1488,118 1489,112 1492,112 1497,115 1501,120 1508,122 1513,127
`.trim().split(/\s+/);

document.getElementById("line").setAttribute("points", history60.join(" "));
document.getElementById("area").setAttribute("d", "M1,207 L" + history60.join(" ") + " V207 Z");
```
